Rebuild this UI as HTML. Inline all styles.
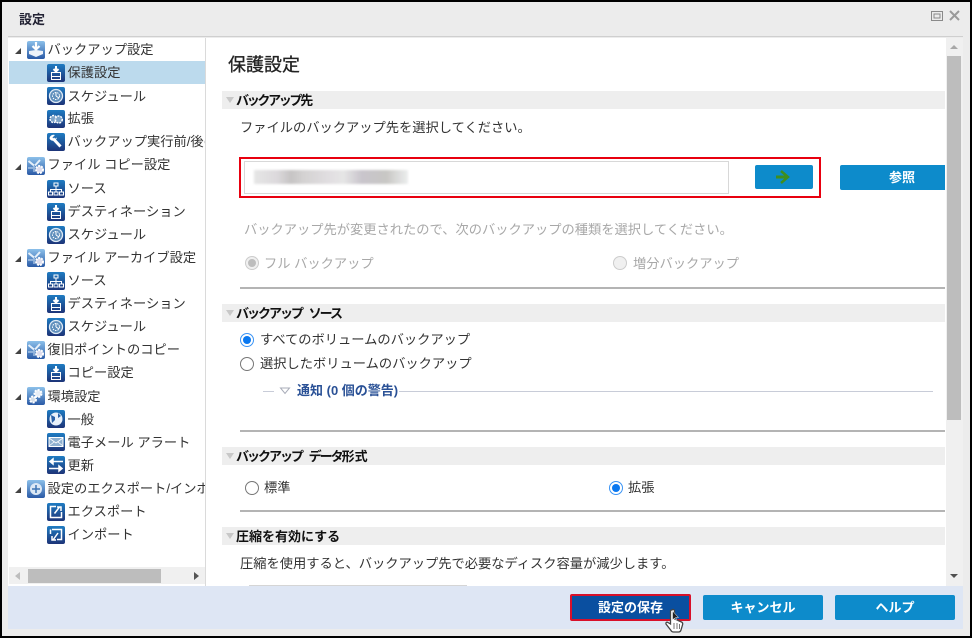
<!DOCTYPE html>
<html lang="ja"><head><meta charset="utf-8"><title>設定</title>
<style>
html,body{margin:0;padding:0;background:#000}
body{width:972px;height:638px;overflow:hidden;position:relative;font-family:"Liberation Sans","Noto Sans CJK JP",sans-serif;font-size:13.25px;color:#333}
div,span,svg{position:absolute;box-sizing:border-box}
.t{white-space:nowrap;line-height:20px;height:20px}
.tree>.t{margin-top:1px;margin-left:-.5px}
.ic{width:18px;height:18px;border-radius:2px;background:linear-gradient(#1f7cc2,#1d3478)}
.ic.p{background:linear-gradient(#8cc0ea,#2a5aa6)}
.ic svg{left:0;top:0;width:18px;height:18px}
.tr{width:0;height:0;border-left:6px solid transparent;border-bottom:6px solid #444;left:16px}
.sec{left:222px;width:723px;height:18px;background:#eee}
.sec .a{left:4px;top:6px;width:0;height:0;border-left:4px solid transparent;border-right:4px solid transparent;border-top:6px solid #c8c8c8}
.sec .t{left:14px;top:0;font-weight:bold;font-size:13px;color:#111}
.k{position:static;letter-spacing:-2.300px}
.k2{position:static;letter-spacing:-2px;word-spacing:5px}
.hr{left:240px;width:705px;height:2px;background:#b4b4b4}
.btn{background:#0d8bcb;border-radius:2px;color:#fff;font-weight:bold;font-size:13px;text-align:center}
.r{width:14px;height:14px;border-radius:50%;background:#fff;border:1.5px solid #777}
.r.on{border:1.5px solid #3b94f5}
.r.on:after{content:"";position:absolute;left:1.5px;top:1.5px;width:8px;height:8px;border-radius:50%;background:#0a78f0}
.r.dis{border-color:#ccc;background:#f0f0f0}
.r.dis.c:after{content:"";position:absolute;left:1.5px;top:1.5px;width:8px;height:8px;border-radius:50%;background:#bdbdbd}
.g{color:#a8a8a8}
</style></head><body>
<svg width="0" height="0" style="position:absolute">
<defs>
<symbol id="dest" viewBox="0 0 18 18"><path d="M9 2v5M6.500 5L9 7.500 11.500 5" stroke="#fff" stroke-width="2" fill="none"/><rect x="4.500" y="8.500" width="9" height="7" fill="none" stroke="#fff"/><path d="M4.500 12.500h9" stroke="#fff"/></symbol>
<symbol id="sch" viewBox="0 0 18 18"><circle cx="9" cy="9" r="6.500" fill="#5f8fbc" stroke="#dfeaf5" stroke-width="1.300"/><circle cx="9" cy="9" r="3.500" fill="none" stroke="#fff" stroke-dasharray="1.500 1"/><path d="M9 9V5M9 9l3 2" stroke="#fff"/></symbol>
<symbol id="ext" viewBox="0 0 18 18"><circle cx="6.500" cy="9" r="3.500" fill="#7ea4c8" stroke="#fff" stroke-width="1.500" stroke-dasharray="2 1"/><circle cx="11.800" cy="9.500" r="3.500" fill="#7ea4c8" stroke="#fff" stroke-width="1.500" stroke-dasharray="2 1"/></symbol>
<symbol id="wr" viewBox="0 0 18 18"><path d="M6 5.500l7.500 8" stroke="#fff" stroke-width="3" fill="none"/><path d="M2.500 5.500a4 4 0 0 1 5.500-3.500L5.500 4.500 7 6.500l3-2a4 4 0 0 1-7.500 1z" fill="#fff"/></symbol>
<symbol id="src" viewBox="0 0 18 18"><path d="M9 6v3M3.500 12V9.500h11V12M9 9v3" stroke="#fff" fill="none"/><rect x="7" y="3" width="4" height="3" fill="none" stroke="#fff"/><rect x="1.500" y="12" width="4" height="3" fill="none" stroke="#fff"/><rect x="7" y="12" width="4" height="3" fill="none" stroke="#fff"/><rect x="12.500" y="12" width="4" height="3" fill="none" stroke="#fff"/></symbol>
<symbol id="cp" viewBox="0 0 18 18"><path d="M1.500 4l5.500 4.500M13 3L8 8.500" stroke="#e6f0fa" stroke-width="2"/><path d="M1 11h5M7 9v6" stroke="#cfe3f5"/><circle cx="12.500" cy="12.500" r="3.500" fill="#dde" stroke="#fff" stroke-width="2" stroke-dasharray="2 1"/></symbol>
<symbol id="bk" viewBox="0 0 18 18"><path d="M9 1v7M5.500 5L9 8.500 12.500 5" stroke="#fff" stroke-width="2.200" fill="none"/><path d="M2 10l7-1 7 1v3l-7 3-7-3z" fill="#eef3fa"/></symbol>
<symbol id="env" viewBox="0 0 18 18"><circle cx="11" cy="6.500" r="3.500" fill="#e8eef6" stroke="#fff" stroke-width="2" stroke-dasharray="2 1.200"/><circle cx="6" cy="12.500" r="3" fill="#d4dde8" stroke="#fff" stroke-width="2" stroke-dasharray="2 1"/></symbol>
<symbol id="gl" viewBox="0 0 18 18"><circle cx="9" cy="9" r="6.500" fill="#e9f1fa"/><path d="M4 5l4 2v3l-3 3zM11 3l3 3-3 2z" fill="#2a62a8"/></symbol>
<symbol id="ml" viewBox="0 0 18 18"><rect x="2" y="4.500" width="14" height="9" fill="#8fb0d0" stroke="#fff"/><path d="M2 5l7 5 7-5M2 13l5-4M16 13l-5-4" stroke="#fff" fill="none" stroke-width=".8"/></symbol>
<symbol id="up" viewBox="0 0 18 18"><path d="M16 5.500H6M6 3L3 5.500 6 8z" fill="#fff" stroke="#fff" stroke-width="1.500"/><path d="M2 12.500h10M12 10l3 2.500-3 2.500z" fill="#fff" stroke="#fff" stroke-width="1.500"/></symbol>
<symbol id="ex" viewBox="0 0 18 18"><path d="M9 3.500H3.500v11h11V9" fill="none" stroke="#fff" stroke-width="1.500"/><path d="M7.500 10.500l5-6.500M10 4h4v4" stroke="#fff" stroke-width="1.500" fill="none"/></symbol>
<symbol id="im" viewBox="0 0 18 18"><path d="M5 3.500h9.500v10H10M3.500 3.500V8" fill="none" stroke="#fff" stroke-width="1.500"/><path d="M11 7l-5 7M5 10v4h4" stroke="#fff" stroke-width="1.500" fill="none"/></symbol>
<symbol id="ie" viewBox="0 0 18 18"><circle cx="9" cy="9" r="6" fill="#dbe8f5"/><path d="M5 9h8M9 5v8" stroke="#3d74b4" stroke-width="1.500"/></symbol>
</defs></svg>

<div style="left:2px;top:2px;width:968px;height:634px;background:#ececec"></div>
<div class="t" style="left:19px;top:10px;font-size:13px;color:#223;font-weight:bold">設定</div>
<div style="left:8px;top:36px;width:955px;height:1px;background:#cfcfcf"></div>
<svg style="left:929px;top:9px" width="34" height="14"><rect x="2.500" y="2.500" width="11" height="9" fill="none" stroke="#8a8a8a"/><rect x="5" y="5" width="6" height="4" fill="none" stroke="#8a8a8a"/><path d="M21 2l9 9M30 2l-9 9" stroke="#9a9a9a" stroke-width="2"/></svg>

<!-- tree -->
<div style="left:8px;top:38px;width:197px;height:548px;background:#fff"></div>
<div style="left:205px;top:38px;width:1px;height:548px;background:#dadada"></div>
<div style="left:9px;top:61px;width:196px;height:23px;background:#bcdaed"></div>
<div class="tree" style="left:8px;top:38px;width:197px;height:548px;overflow:hidden">
<div class="tr" style="left:7px;top:10px"></div><div class="ic p" style="left:19px;top:3px"><svg><use href="#bk"/></svg></div><div class="t" style="left:40px;top:1px">バックアップ設定</div>
<div class="ic" style="left:39px;top:26px"><svg><use href="#dest"/></svg></div><div class="t" style="left:60px;top:24px">保護設定</div>
<div class="ic" style="left:39px;top:49px"><svg><use href="#sch"/></svg></div><div class="t" style="left:60px;top:48px">スケジュール</div>
<div class="ic" style="left:39px;top:72px"><svg><use href="#ext"/></svg></div><div class="t" style="left:60px;top:70px">拡張</div>
<div class="ic" style="left:39px;top:95px"><svg><use href="#wr"/></svg></div><div class="t" style="left:60px;top:93px">バックアップ実行前/後の設定</div>

<div class="tr" style="left:7px;top:126px"></div><div class="ic p" style="left:19px;top:119px"><svg><use href="#cp"/></svg></div><div class="t" style="left:40px;top:116px">ファイル コピー設定</div>
<div class="ic" style="left:39px;top:142px"><svg><use href="#src"/></svg></div><div class="t" style="left:60px;top:140px">ソース</div>
<div class="ic" style="left:39px;top:165px"><svg><use href="#dest"/></svg></div><div class="t" style="left:60px;top:163px">デスティネーション</div>
<div class="ic" style="left:39px;top:188px"><svg><use href="#sch"/></svg></div><div class="t" style="left:60px;top:186px">スケジュール</div>

<div class="tr" style="left:7px;top:218px"></div><div class="ic p" style="left:19px;top:211px"><svg><use href="#cp"/></svg></div><div class="t" style="left:40px;top:209px">ファイル アーカイブ設定</div>
<div class="ic" style="left:39px;top:234px"><svg><use href="#src"/></svg></div><div class="t" style="left:60px;top:232px">ソース</div>
<div class="ic" style="left:39px;top:257px"><svg><use href="#dest"/></svg></div><div class="t" style="left:60px;top:255px">デスティネーション</div>
<div class="ic" style="left:39px;top:280px"><svg><use href="#sch"/></svg></div><div class="t" style="left:60px;top:278px">スケジュール</div>

<div class="tr" style="left:7px;top:310px"></div><div class="ic p" style="left:19px;top:303px"><svg><use href="#cp"/></svg></div><div class="t" style="left:40px;top:301px">復旧ポイントのコピー</div>
<div class="ic" style="left:39px;top:326px"><svg><use href="#dest"/></svg></div><div class="t" style="left:60px;top:324px">コピー設定</div>

<div class="tr" style="left:7px;top:356px"></div><div class="ic p" style="left:19px;top:349px"><svg><use href="#env"/></svg></div><div class="t" style="left:40px;top:348px">環境設定</div>
<div class="ic" style="left:39px;top:372px"><svg><use href="#gl"/></svg></div><div class="t" style="left:60px;top:371px">一般</div>
<div class="ic" style="left:39px;top:395px"><svg><use href="#ml"/></svg></div><div class="t" style="left:60px;top:394px">電子メール アラート</div>
<div class="ic" style="left:39px;top:418px"><svg><use href="#up"/></svg></div><div class="t" style="left:60px;top:417px">更新</div>

<div class="tr" style="left:7px;top:449px"></div><div class="ic p" style="left:19px;top:442px"><svg><use href="#ie"/></svg></div><div class="t" style="left:40px;top:440px">設定のエクスポート/インポート</div>
<div class="ic" style="left:39px;top:465px"><svg><use href="#ex"/></svg></div><div class="t" style="left:60px;top:463px">エクスポート</div>
<div class="ic" style="left:39px;top:488px"><svg><use href="#im"/></svg></div><div class="t" style="left:60px;top:486px">インポート</div>

<div style="left:1px;top:529px;width:196px;height:17px;background:#f0f0f0"></div>
<div style="left:20px;top:531px;width:133px;height:14px;background:#bdbdbd"></div>
<div style="left:7px;top:534px;width:0;height:0;border-top:4px solid transparent;border-bottom:4px solid transparent;border-right:5px solid #bdbdbd"></div>
<div style="left:186px;top:534px;width:0;height:0;border-top:4px solid transparent;border-bottom:4px solid transparent;border-left:5px solid #555"></div>
</div>

<!-- content -->
<div style="left:206px;top:38px;width:757px;height:548px;background:#fff"></div>
<div style="left:946px;top:38px;width:17px;height:548px;background:#f0f0f0"></div>
<div style="left:947px;top:56px;width:14px;height:364px;background:#bdbdbd"></div>
<div style="left:950px;top:45px;width:0;height:0;border-left:4px solid transparent;border-right:4px solid transparent;border-bottom:4px solid #a8a8a8"></div>
<div style="left:950px;top:574px;width:0;height:0;border-left:4px solid transparent;border-right:4px solid transparent;border-top:4px solid #505050"></div>

<div class="t" style="left:228px;top:54px;font-size:18px;color:#222;-webkit-text-stroke:.3px #222;line-height:22px;height:22px">保護設定</div>

<div class="sec" style="top:91px"><div class="a"></div><div class="t"><span class="k">バックアップ先</span></div></div>
<div class="t" style="left:240px;top:118px">ファイルのバックアップ先を選択してください。</div>
<div style="left:239px;top:157px;width:582px;height:41px;border:2px solid #e8000f"></div>
<div style="left:244px;top:161px;width:485px;height:33px;border:1.500px solid #d8d8d8;background:#fff"></div>
<div style="left:254px;top:170px;width:154px;height:14px;background:linear-gradient(90deg,#e6e6e6,#dcd9dc 15%,#c6c4c4 24%,#d4d2d2 32%,#e2dfe2 50%,#e6e6e6 58%,#c9c5cc 70%,#c8c7c4 86%,#eceeee);filter:blur(1px)"></div>
<div class="btn" style="left:755px;top:165px;width:58px;height:24px"><svg style="left:20px;top:4px" width="16" height="16"><path d="M1 8h10" stroke="#3f8e1e" stroke-width="3"/><path d="M6 2l7 6-7 6" stroke="#3f8e1e" stroke-width="2.500" fill="none"/></svg></div>
<div class="btn" style="left:840px;top:165px;width:105px;height:25px;line-height:26px;border-radius:2px 0 0 2px"><span style="left:49px;top:0;white-space:nowrap">参照</span></div>

<div class="t g" style="left:244px;top:220px">バックアップ先が変更されたので、次のバックアップの種類を選択してください。</div>
<div class="r dis c" style="left:245px;top:256px"></div><div class="t g" style="left:264px;top:254px">フル バックアップ</div>
<div class="r dis" style="left:613px;top:256px"></div><div class="t g" style="left:633px;top:254px">増分バックアップ</div>
<div class="hr" style="top:287px"></div>

<div class="sec" style="top:304px"><div class="a"></div><div class="t"><span class="k2">バックアップ ソース</span></div></div>
<div class="r on" style="left:240px;top:333px"></div><div class="t" style="left:260px;top:330px">すべてのボリュームのバックアップ</div>
<div class="r" style="left:240px;top:357px"></div><div class="t" style="left:260px;top:354px">選択したボリュームのバックアップ</div>
<div style="left:263px;top:391px;width:11px;height:1px;background:#c8ccd8"></div>
<svg style="left:279px;top:387px" width="12" height="8"><path d="M1.500 1h9L6 6.500z" fill="#fff" stroke="#a8acb8"/></svg>
<div class="t" style="left:297px;top:381px;color:#2a5196;font-weight:bold;font-size:13px">通知 (0 個の警告)</div>
<div style="left:399px;top:391px;width:534px;height:1px;background:#c8ccd8"></div>
<div class="hr" style="top:430px"></div>

<div class="sec" style="top:447px"><div class="a"></div><div class="t"><span class="k2">バックアップ データ</span>形式</div></div>
<div class="r" style="left:245px;top:481px"></div><div class="t" style="left:264px;top:478px">標準</div>
<div class="r on" style="left:609px;top:481px"></div><div class="t" style="left:628px;top:478px">拡張</div>
<div class="hr" style="top:510px"></div>

<div class="sec" style="top:527px"><div class="a"></div><div class="t">圧縮を有効にする</div></div>
<div class="t" style="left:240px;top:554px">圧縮を使用すると、バックアップ先で必要なディスク容量が減少します。</div>
<div style="left:249px;top:585px;width:218px;height:1px;background:#d5d5d5"></div>

<!-- footer -->
<div style="left:8px;top:586px;width:955px;height:43px;background:#dee6f4"></div>
<div class="btn" style="left:570px;top:594px;width:121px;height:27px;background:#0a4fa0;border:2px solid #d8102a;line-height:23px">設定の保存</div>
<div class="btn" style="left:703px;top:595px;width:120px;height:25px;line-height:25px">キャンセル</div>
<div class="btn" style="left:835px;top:595px;width:120px;height:25px;line-height:25px">ヘルプ</div>
<svg style="left:664px;top:608px" width="24" height="28"><path d="M8 2c1-1 2.500-.5 2.500 1v8l7 3c1 .5 1.500 1.500 1 3l-1.500 5c-.5 1.500-1 2-2.500 2h-5c-1 0-2-.5-2.500-1.500L2 16c-.5-1 .5-2.500 2-1.500l2.500 1.500V3c0-.5.500-1 1.500-1z" fill="#fff" stroke="#444" stroke-width="1.300"/><path d="M10 15v6M13 15v6M15.500 16v5" stroke="#777"/><path d="M8.500 3l0 9 2-2 1.500 3 1-.5-1.500-3h3z" fill="#222" stroke="#fff" stroke-width=".5"/></svg>
</body></html>
